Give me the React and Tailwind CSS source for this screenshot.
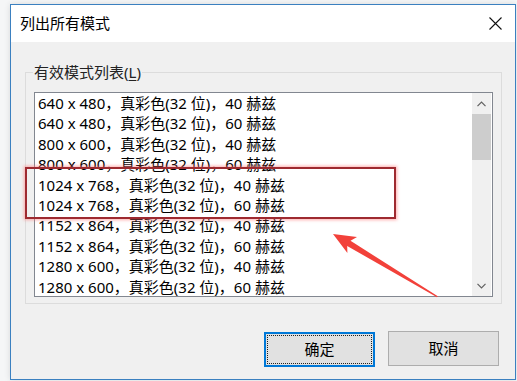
import React from 'react';

const modes = [
  ['640 x 480', '40'],
  ['640 x 480', '60'],
  ['800 x 600', '40'],
  ['800 x 600', '60'],
  ['1024 x 768', '40'],
  ['1024 x 768', '60'],
  ['1152 x 864', '40'],
  ['1152 x 864', '60'],
  ['1280 x 600', '40'],
  ['1280 x 600', '60'],
];

const Chevron = ({ down }) => (
  <svg width="9" height="6" viewBox="0 0 9 6" className="block">
    <path
      d={down ? 'M0.5 0.8 L4.5 4.8 L8.5 0.8' : 'M0.5 5.2 L4.5 1.2 L8.5 5.2'}
      fill="none"
      stroke="#606060"
      strokeWidth="1.2"
    />
  </svg>
);

export default function App() {
  return (
    <div className="relative w-[517px] h-[381px] overflow-hidden bg-[#f5f6f7] pl-[10px] pt-[4px] font-['Segoe_UI','Noto_Sans','Noto_Sans_CJK_SC',sans-serif] text-black">
      {/* dialog window */}
      <div className="w-[506px] h-[376px] flex flex-col border border-[#3b80c0] bg-[#f0f0f0] shadow-[0_0_6px_rgba(0,0,0,0.12)]">
        {/* title bar */}
        <div className="h-[37px] shrink-0 bg-white flex items-center justify-between pl-[9px] pr-[12px]">
          <span className="text-[15px] leading-none">列出所有模式</span>
          <svg width="13" height="13" viewBox="0 0 13 13" className="block mr-[1px]">
            <path d="M0.5 0.5 L12.5 12.5 M12.5 0.5 L0.5 12.5" stroke="#111" strokeWidth="1.1" />
          </svg>
        </div>

        {/* group box */}
        <fieldset className="ml-[14px] mt-[20px] w-[477px] h-[242px] border border-[#dcdcdc] px-[8px] pb-[6px]">
          <legend className="px-[1px] -ml-[1px] text-[15px] leading-[20px] text-[#222]">
            有效模式列表(<span className="underline underline-offset-2">L</span>)
          </legend>

          {/* list box */}
          <div className="mt-[10px] w-[459px] h-[205px] border border-[#828790] bg-white flex">
            <div className="flex-1 overflow-hidden">
              {modes.map(([res, hz], i) => (
                <div key={i} className="h-[20.4px] pl-[3px] text-[15px] leading-[20.4px] whitespace-nowrap">
                  {res}，真彩色(32 位)，{hz} 赫兹
                </div>
              ))}
            </div>
            {/* scrollbar */}
            <div className="w-[19px] mr-[1px] bg-[#f0f0f0] flex flex-col">
              <div className="h-[21px] flex items-center justify-center">
                <Chevron />
              </div>
              <div className="h-[46px] bg-[#cdcdcd]" />
              <div className="flex-1" />
              <div className="h-[21px] flex items-center justify-center">
                <Chevron down />
              </div>
            </div>
          </div>
        </fieldset>

        {/* buttons */}
        <div className="mt-[28px] flex justify-end gap-[13px] pr-[16px]">
          <button className="w-[111px] h-[35px] border-2 border-[#0078d7] bg-[#e1e1e1] p-[1px]">
            <div className="w-full h-full border border-dotted border-[#222] flex items-center justify-center text-[15px]">
              确定
            </div>
          </button>
          <button className="w-[111px] h-[35px] -mt-[1px] border border-[#adadad] bg-[#e1e1e1] flex items-center justify-center text-[15px]">
            取消
          </button>
        </div>
      </div>

      {/* annotation: red highlight box */}
      <div className="absolute left-[25px] top-[167px] w-[371px] h-[52px] border-2 border-[#9e2a30] shadow-[0_0_3px_1px_rgba(255,110,110,0.55)]" />

      {/* annotation: red arrow */}
      <svg className="absolute left-0 top-0 pointer-events-none" width="517" height="381" viewBox="0 0 517 381">
        <polygon
          points="333,234 357,237 350.5,240.8 437.8,296.2 437,297.2 347.2,246 347.4,253"
          fill="#f2413a"
        />
      </svg>
    </div>
  );
}
